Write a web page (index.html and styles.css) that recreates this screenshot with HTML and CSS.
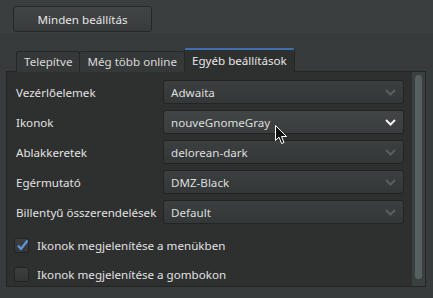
FILE: index.html
```html
<!DOCTYPE html>
<html>
<head>
    <meta charset="UTF-8">
    <title>Beállítások</title>
    <link rel="stylesheet" href="styles.css">
</head>
<body>
    <div class="toolbar">
        <button class="btn">Minden beállítás</button>
    </div>
    <div class="notebook">
        <div class="tabs">
            <div class="tab">Telepítve</div>
            <div class="tab">Még több online</div>
            <div class="tab active">Egyéb beállítások</div>
        </div>
        <div class="panel">
            <div class="settings">
                <div class="row">
                    <span class="label">Vezérlőelemek</span>
                    <div class="combo"><span>Adwaita</span><svg class="chev" width="11" height="7" viewBox="0 0 11 7"><path d="M1 1 L5.5 5.5 L10 1" /></svg></div>
                </div>
                <div class="row">
                    <span class="label">Ikonok</span>
                    <div class="combo hover"><span>nouveGnomeGray</span><svg class="chev" width="11" height="7" viewBox="0 0 11 7"><path d="M1 1 L5.5 5.5 L10 1" /></svg></div>
                </div>
                <div class="row">
                    <span class="label">Ablakkeretek</span>
                    <div class="combo"><span>delorean-dark</span><svg class="chev" width="11" height="7" viewBox="0 0 11 7"><path d="M1 1 L5.5 5.5 L10 1" /></svg></div>
                </div>
                <div class="row">
                    <span class="label">Egérmutató</span>
                    <div class="combo"><span>DMZ-Black</span><svg class="chev" width="11" height="7" viewBox="0 0 11 7"><path d="M1 1 L5.5 5.5 L10 1" /></svg></div>
                </div>
                <div class="row">
                    <span class="label">Billentyű összerendelések</span>
                    <div class="combo"><span>Default</span><svg class="chev" width="11" height="7" viewBox="0 0 11 7"><path d="M1 1 L5.5 5.5 L10 1" /></svg></div>
                </div>
                <div class="check first">
                    <span class="box"><svg width="13" height="13" viewBox="0 0 13 13"><path d="M2 6.5 L5 10 L11.5 1.5" /></svg></span>
                    <span>Ikonok megjelenítése a menükben</span>
                </div>
                <div class="check">
                    <span class="box"></span>
                    <span>Ikonok megjelenítése a gombokon</span>
                </div>
            </div>
            <div class="scrollbar"><div class="thumb"></div></div>
        </div>
    </div>
    <svg class="cursor" width="13" height="20" viewBox="0 0 13 20">
        <path d="M0.5 0.5 L0.5 15.5 L4 12.2 L6.6 18.5 L9 17.5 L6.5 11.5 L11.5 11.5 Z" fill="#111" stroke="#fff" stroke-width="1"/>
    </svg>
</body>
</html>
```

FILE: styles.css
```css
body {
    margin: 0;
    width: 433px;
    height: 298px;
    overflow: hidden;
    background: #383b3b;
    font-family: "Noto Sans", "Open Sans", sans-serif;
    font-size: 11.6px;
    color: #e2e2e2;
    position: relative;
}

.toolbar {
    height: 35px;
    padding: 6px 13px 0;
    box-sizing: border-box;
    background: #3b3e3e;
    border-bottom: 1px solid #333636;
}

.btn {
    width: 139px;
    height: 26px;
    border: 1px solid #242727;
    border-radius: 3px;
    background: linear-gradient(#414545, #383b3b);
    color: #e6e6e6;
    font-family: inherit;
    font-size: 11.6px;
    padding: 0;
}

.notebook {
    padding: 14px 7px 9px 6px;
}

.tabs {
    display: flex;
    align-items: flex-end;
    padding-left: 10px;
    height: 23px;
    margin-bottom: -1px;
    position: relative;
    z-index: 1;
}

.tab {
    height: 21px;
    box-sizing: border-box;
    padding: 0 7px;
    line-height: 19px;
    border: 1px solid #242727;
    border-bottom: none;
    border-radius: 3px 3px 0 0;
    background: #353838;
    color: #dadada;
}

.tab + .tab {
    margin-left: -1px;
}

.tab.active {
    height: 24px;
    line-height: 21px;
    background: #2e2f2f;
    border-top: 2px solid #3f6fb0;
    color: #e6e6e6;
}

.panel {
    display: flex;
    height: 216px;
    box-sizing: border-box;
    border: 1px solid #232525;
    background: #2e2f2f;
}

.settings {
    flex: 1;
    display: flex;
    flex-direction: column;
    gap: 6px;
    padding: 8px 8px 0 9px;
}

.row {
    display: flex;
    align-items: center;
    justify-content: space-between;
    height: 24px;
}

.combo {
    width: 241px;
    height: 24px;
    box-sizing: border-box;
    border: 1px solid #222424;
    border-radius: 3px;
    background: linear-gradient(#3b3f3f, #343737);
    display: flex;
    align-items: center;
    justify-content: space-between;
    padding: 0 7px 0 7px;
    color: #dedede;
}

.combo.hover {
    background: linear-gradient(#414545, #3a3d3d);
}

.chev path {
    fill: none;
    stroke: #5a5e5e;
    stroke-width: 2;
}

.combo.hover .chev path {
    stroke: #f2f2f2;
}

.check {
    display: flex;
    align-items: center;
    gap: 8px;
    height: 15px;
    margin-left: -2px;
}

.check.first {
    margin-top: 8px;
}

.check + .check {
    margin-top: 8px;
}

.box {
    width: 15px;
    height: 15px;
    box-sizing: border-box;
    border: 1px solid #222424;
    border-radius: 3px;
    background: linear-gradient(#3b3f3f, #333636);
    position: relative;
}

.box svg {
    position: absolute;
    left: 1px;
    top: 0;
}

.box path {
    fill: none;
    stroke: #5f95de;
    stroke-width: 2.2;
}

.scrollbar {
    width: 13px;
    background: #3a4040;
    padding: 3px 3px 7px;
    box-sizing: border-box;
}

.thumb {
    height: 100%;
    border-radius: 4px;
    background: #566060;
}

.cursor {
    position: absolute;
    left: 275px;
    top: 125px;
}
```
